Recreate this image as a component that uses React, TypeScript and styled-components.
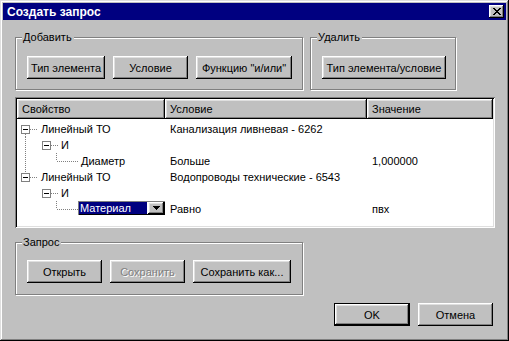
import React from 'react'
import styled, { createGlobalStyle } from 'styled-components'

const GlobalStyle = createGlobalStyle`
	body {
		margin: 0;
		font-family: 'Liberation Sans', Arial, sans-serif;
		font-size: 11px;
		color: #000;
	}
`

const raised = `
	box-shadow: inset -1px -1px #000, inset 1px 1px #fff, inset -2px -2px #808080,
		inset 2px 2px #dfdfdf;
`

const Window = styled.div`
	box-sizing: border-box;
	width: 509px;
	height: 341px;
	padding: 3px;
	background: #c0c0c0;
	display: flex;
	flex-direction: column;
	box-shadow: inset -1px -1px #000, inset 1px 1px #dfdfdf, inset -2px -2px #808080,
		inset 2px 2px #fff;
`

const TitleBar = styled.div`
	height: 17px;
	flex: none;
	background: #000080;
	color: #fff;
	font-weight: bold;
	font-size: 12px;
	display: flex;
	align-items: center;
	justify-content: space-between;
	padding: 0 2px 0 4px;
`

const CloseButton = styled.div`
	width: 15px;
	height: 13px;
	background: #c0c0c0;
	display: flex;
	align-items: center;
	justify-content: center;
	${raised}
`

const Content = styled.div`
	display: flex;
	flex-direction: column;
	padding-left: 12px;
`

const TopRow = styled.div`
	display: flex;
	gap: 7px;
	margin-top: 17px;
`

const Group = styled.div<{ $width: number; $padTop: number }>`
	position: relative;
	box-sizing: border-box;
	width: ${(p) => p.$width}px;
	height: 53px;
	border: 1px solid #808080;
	box-shadow: inset 1px 1px #fff, 1px 1px #fff;
	padding: ${(p) => p.$padTop}px 0 0 11px;
	display: flex;
	gap: 8px;
	align-items: flex-start;
`

const GroupLabel = styled.span`
	position: absolute;
	top: -7px;
	left: 6px;
	padding: 0 2px 0 1px;
	background: #c0c0c0;
	line-height: 13px;
`

const Button = styled.button<{ $w: number }>`
	width: ${(p) => p.$w}px;
	height: 23px;
	flex: none;
	padding: 0;
	border: none;
	background: #c0c0c0;
	font: inherit;
	color: #000;
	${raised}
	&:disabled {
		color: #808080;
		text-shadow: 1px 1px #fff;
	}
`

const DefaultButton = styled(Button)`
	box-shadow: inset 0 0 0 1px #000, inset -2px -2px #000, inset 2px 2px #fff,
		inset -3px -3px #808080, inset 3px 3px #dfdfdf;
`

const ListView = styled.div`
	box-sizing: border-box;
	width: 480px;
	height: 131px;
	margin-top: 7px;
	padding: 2px;
	background: #fff;
	box-shadow: inset 1px 1px #808080, inset -1px -1px #fff, inset 2px 2px #000,
		inset -2px -2px #dfdfdf;
`

const Columns = styled.div`
	display: grid;
	grid-template-columns: 148px 202px 126px;
`

const Header = styled(Columns)`
	height: 20px;
	margin-bottom: 2px;
`

const HeaderCell = styled.div`
	background: #c0c0c0;
	line-height: 20px;
	padding-left: 5px;
	${raised}
`

const Row = styled(Columns)`
	height: 16px;
	line-height: 16px;
`

const TreeCell = styled.div`
	display: flex;
	align-items: center;
	white-space: nowrap;
`

const TreeText = styled.span`
	padding-left: 2px;
`

const Cell = styled.div`
	padding-left: 5px;
	white-space: nowrap;
`

const Combo = styled.div`
	box-sizing: border-box;
	align-self: flex-start;
	width: 87px;
	height: 14px;
	margin-left: -1px;
	display: flex;
	gap: 1px;
	padding: 1px;
	background: #fff;
	box-shadow: inset 1px 1px #808080, inset -1px -1px #000;
`

const ComboValue = styled.div`
	flex: 1;
	background: #000080;
	color: #fff;
	line-height: 12px;
	padding-left: 1px;
`

const ComboArrow = styled.div`
	width: 16px;
	background: #c0c0c0;
	display: flex;
	align-items: center;
	justify-content: center;
	${raised}
`

const Bottom = styled.div`
	margin-top: 14px;
`

const Footer = styled.div`
	display: flex;
	justify-content: flex-end;
	gap: 8px;
	margin-top: 8px;
	padding-right: 13px;
`

type Node = {
	level: 1 | 2 | 3
	prop: string
	cond: string
	value: string
	trunk?: 'below' | 'through' | 'above'
	editing?: boolean
}

const nodes: Node[] = [
	{ level: 1, prop: 'Линейный ТО', cond: 'Канализация ливневая - 6262', value: '', trunk: 'below' },
	{ level: 2, prop: 'И', cond: '', value: '', trunk: 'through' },
	{ level: 3, prop: 'Диаметр', cond: 'Больше', value: '1,000000', trunk: 'through' },
	{ level: 1, prop: 'Линейный ТО', cond: 'Водопроводы технические - 6543', value: '', trunk: 'above' },
	{ level: 2, prop: 'И', cond: '', value: '' },
	{ level: 3, prop: 'Материал', cond: 'Равно', value: 'пвх', editing: true },
]

const gutter = { 1: 22, 2: 42, 3: 62 }

const dots = { stroke: '#808080', strokeDasharray: '1 1', shapeRendering: 'crispEdges' as const }

const Expander = ({ x }: { x: number }) => (
	<>
		<rect x={x + 0.5} y={4.5} width={8} height={8} fill="#fff" stroke="#808080" shapeRendering="crispEdges" />
		<line x1={x + 2} y1={8.5} x2={x + 7} y2={8.5} stroke="#000" shapeRendering="crispEdges" />
		<line x1={x + 9} y1={8.5} x2={x + 17} y2={8.5} {...dots} />
	</>
)

const TreeLines = ({ node }: { node: Node }) => (
	<svg width={gutter[node.level]} height={16}>
		{node.trunk === 'below' && <line x1={8.5} y1={13} x2={8.5} y2={16} {...dots} />}
		{node.trunk === 'through' && <line x1={8.5} y1={0} x2={8.5} y2={16} {...dots} />}
		{node.trunk === 'above' && <line x1={8.5} y1={0} x2={8.5} y2={4} {...dots} />}
		{node.level === 1 && <Expander x={4} />}
		{node.level === 2 && <Expander x={25} />}
		{node.level === 3 && (
			<>
				<line x1={39.5} y1={0} x2={39.5} y2={8} {...dots} />
				<line x1={40} y1={8.5} x2={61} y2={8.5} {...dots} />
			</>
		)}
	</svg>
)

const CloseGlyph = () => (
	<svg width={8} height={7} shapeRendering="crispEdges">
		<path
			fill="#000"
			d="M0 0h2v1h-2zM6 0h2v1h-2zM1 1h2v1h-2zM5 1h2v1h-2zM2 2h4v1h-4zM3 3h2v1h-2zM2 4h4v1h-4zM1 5h2v1h-2zM5 5h2v1h-2zM0 6h2v1h-2zM6 6h2v1h-2z"
		/>
	</svg>
)

const ArrowGlyph = () => (
	<svg width={7} height={4} shapeRendering="crispEdges">
		<path fill="#000" d="M0 0h7v1h-7zM1 1h5v1h-5zM2 2h3v1h-3zM3 3h1v1h-1z" />
	</svg>
)

export default function App() {
	return (
		<Window>
			<GlobalStyle />
			<TitleBar>
				<span>Создать запрос</span>
				<CloseButton>
					<CloseGlyph />
				</CloseButton>
			</TitleBar>
			<Content>
				<TopRow>
					<Group $width={288} $padTop={18}>
						<GroupLabel>Добавить</GroupLabel>
						<Button $w={78}>Тип элемента</Button>
						<Button $w={75}>Условие</Button>
						<Button $w={96}>Функцию "и/или"</Button>
					</Group>
					<Group $width={146} $padTop={18}>
						<GroupLabel>Удалить</GroupLabel>
						<Button $w={124}>Тип элемента/условие</Button>
					</Group>
				</TopRow>
				<ListView>
					<Header>
						<HeaderCell>Свойство</HeaderCell>
						<HeaderCell>Условие</HeaderCell>
						<HeaderCell>Значение</HeaderCell>
					</Header>
					{nodes.map((node, i) => (
						<Row key={i}>
							<TreeCell>
								<TreeLines node={node} />
								{node.editing ? (
									<Combo>
										<ComboValue>{node.prop}</ComboValue>
										<ComboArrow>
											<ArrowGlyph />
										</ComboArrow>
									</Combo>
								) : (
									<TreeText>{node.prop}</TreeText>
								)}
							</TreeCell>
							<Cell>{node.cond}</Cell>
							<Cell>{node.value}</Cell>
						</Row>
					))}
				</ListView>
				<Bottom>
					<Group $width={288} $padTop={17}>
						<GroupLabel>Запрос</GroupLabel>
						<Button $w={75}>Открыть</Button>
						<Button $w={75} disabled>
							Сохранить
						</Button>
						<Button $w={98}>Сохранить как...</Button>
					</Group>
				</Bottom>
				<Footer>
					<DefaultButton $w={76}>OK</DefaultButton>
					<Button $w={75}>Отмена</Button>
				</Footer>
			</Content>
		</Window>
	)
}
